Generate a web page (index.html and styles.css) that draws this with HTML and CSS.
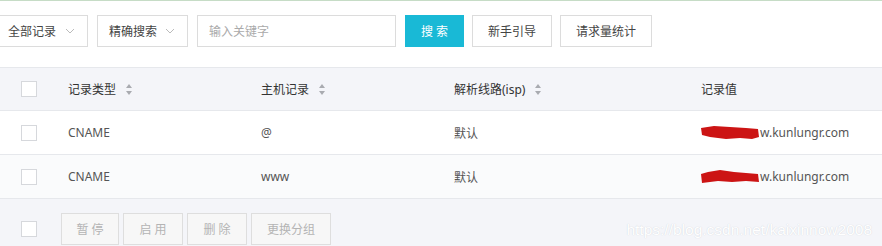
FILE: index.html
```html
<!DOCTYPE html>
<html lang="zh-CN">
<head>
  <meta charset="UTF-8" />
  <title>解析记录</title>
  <link rel="stylesheet" href="styles.css">
</head>
<body>
  <div class="page">
    <div class="toolbar">
      <div class="select sel-all">全部记录 <svg class="chev" width="10" height="6" viewBox="0 0 10 6"><polyline points="1,1 5,5 9,1" /></svg></div>
      <div class="select sel-mode">精确搜索 <svg class="chev" width="10" height="6" viewBox="0 0 10 6"><polyline points="1,1 5,5 9,1" /></svg></div>
      <input class="keyword" type="text" placeholder="输入关键字" />
      <button class="btn btn-primary">搜 索</button>
      <button class="btn btn-guide">新手引导</button>
      <button class="btn btn-stat">请求量统计</button>
    </div>

    <div class="table">
      <div class="row head">
        <div class="cell"><span class="check"></span></div>
        <div class="cell">记录类型 <span class="sort"></span></div>
        <div class="cell">主机记录 <span class="sort"></span></div>
        <div class="cell">解析线路(isp) <span class="sort"></span></div>
        <div class="cell">记录值</div>
      </div>
      <div class="row">
        <div class="cell"><span class="check"></span></div>
        <div class="cell">CNAME</div>
        <div class="cell">@</div>
        <div class="cell">默认</div>
        <div class="cell value">
          <svg class="mask" width="60" height="16" viewBox="0 0 60 16"><path d="M1 3 L14 1 L30 2 L46 3 L58 4 L59 12 L52 14 L40 13 L26 14 L10 12 L2 10 Z" /></svg>
          <span>w.kunlungr.com</span>
        </div>
      </div>
      <div class="row alt">
        <div class="cell"><span class="check"></span></div>
        <div class="cell">CNAME</div>
        <div class="cell">www</div>
        <div class="cell">默认</div>
        <div class="cell value">
          <svg class="mask" width="60" height="16" viewBox="0 0 60 16"><path d="M1 5 L8 3 L20 1 L34 3 L46 4 L58 5 L59 13 L46 12 L32 13 L18 12 L2 14 Z" /></svg>
          <span>w.kunlungr.com</span>
        </div>
      </div>
      <div class="footer">
        <span class="check"></span>
        <button class="btn btn-off w58">暂 停</button>
        <button class="btn btn-off w60">启 用</button>
        <button class="btn btn-off w60">删 除</button>
        <button class="btn btn-off w80">更换分组</button>
      </div>
    </div>

    <div class="watermark">https://blog.csdn.net/kaixinnow2008</div>
  </div>
</body>
</html>
```

FILE: styles.css
```css
body {
  margin: 0;
  background-color: #fff;
  font-family: "Noto Sans", "Noto Sans CJK SC", sans-serif;
  font-size: 12px;
  color: #555;
}

.page {
  position: relative;
  width: 882px;
  height: 246px;
  overflow: hidden;
  border-top: 1px solid #c6dcc6;
  box-sizing: border-box;
}

.toolbar {
  display: flex;
  gap: 9px;
  padding-top: 14px;
  height: 32px;
}

.select, .keyword, .btn {
  box-sizing: border-box;
  height: 32px;
  border: 1px solid #dcdcdc;
  background-color: #fff;
  font-family: inherit;
  font-size: 12px;
}

.select {
  display: flex;
  align-items: center;
  justify-content: space-between;
  padding: 0 12px 0 9px;
  color: #444;
}

.sel-all {
  width: 89px;
  padding-left: 8px;
  margin-left: -1px;
}

.sel-mode {
  width: 91px;
  padding-left: 11px;
}

.chev polyline {
  fill: none;
  stroke: #bbb;
  stroke-width: 1;
}

.keyword {
  width: 199px;
  padding: 0 11px;
  color: #333;
  outline: none;
}

.keyword::placeholder {
  color: #aaa;
}

.btn {
  padding: 0;
  color: #444;
  cursor: pointer;
}

.btn-primary {
  width: 59px;
  background-color: #19b9d6;
  border-color: #19b9d6;
  color: #fff;
}

.btn-guide {
  width: 80px;
  margin-left: -1px;
}

.btn-stat {
  width: 92px;
  margin-left: -1px;
}

.table {
  margin-top: 20px;
  border-top: 1px solid #e6e8ec;
}

.row {
  display: grid;
  grid-template-columns: 68px 193px 193px 247px 1fr;
  height: 44px;
  border-bottom: 1px solid #e6e8ec;
  box-sizing: border-box;
  background-color: #fff;
}

.row.head {
  height: 43px;
  background-color: #f4f5f9;
  color: #333;
}

.row.alt {
  background-color: #fafbfc;
}

.cell {
  display: flex;
  align-items: center;
}

.cell:first-child {
  padding-left: 21px;
}

.check {
  display: inline-block;
  width: 14px;
  height: 14px;
  border: 1px solid #d6d8dc;
  background-color: #fff;
}

.sort {
  display: inline-block;
  position: relative;
  width: 7px;
  height: 13px;
  margin-left: 10px;
}

.sort::before, .sort::after {
  content: "";
  position: absolute;
  left: 0;
  border-left: 3.5px solid transparent;
  border-right: 3.5px solid transparent;
}

.sort::before {
  top: 1px;
  border-bottom: 4px solid #a9abb0;
}

.sort::after {
  bottom: 1px;
  border-top: 4px solid #a9abb0;
}

.value span {
  color: #555;
}

.mask {
  margin-left: -1px;
}

.mask path {
  fill: #cc1414;
}

.footer {
  display: flex;
  align-items: center;
  gap: 4px;
  height: 47px;
  padding: 12px 0 0 21px;
  box-sizing: border-box;
  background-color: #f4f5f9;
}

.footer .check {
  margin-right: 20px;
}

.btn-off {
  background-color: #f7f7f7;
  border-color: #dedede;
  color: #b4b4b4;
  cursor: not-allowed;
}

.w58 { width: 58px; }
.w60 { width: 60px; }
.w80 { width: 80px; }

.watermark {
  position: absolute;
  right: 10px;
  bottom: 7px;
  font-family: "Liberation Sans", Arial, sans-serif;
  font-size: 15.5px;
  color: #fff;
  text-shadow: 0 0 1px #c8ccd4;
}
```
